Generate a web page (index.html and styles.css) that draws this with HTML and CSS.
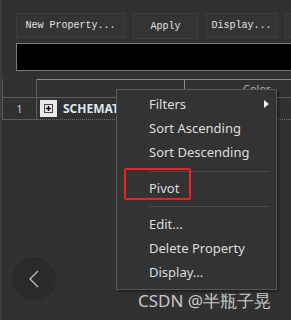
FILE: index.html
```html
<!DOCTYPE html>
<html lang="en">
<head>
    <meta charset="UTF-8">
    <title>Property Grid</title>
    <link rel="stylesheet" href="styles.css">
</head>
<body>
    <div class="panel">
        <div class="toolbar">
            <button class="btn btn-new">New Property...</button>
            <button class="btn btn-apply">Apply</button>
            <button class="btn btn-display">Display...</button>
            <button class="btn btn-more"></button>
        </div>
        <div class="filter"></div>
        <div class="grid">
            <div class="corner"></div>
            <div class="head">
                <div class="head-name"></div>
                <div class="head-color">Color</div>
            </div>
            <div class="rownum">1</div>
            <div class="cell">
                <span class="expand">
                    <svg width="9" height="9" viewBox="0 0 9 9">
                        <rect x="0.5" y="0.5" width="8" height="8" fill="none" stroke="#444"/>
                        <path d="M2 4.5 H7 M4.5 2 V7" stroke="#111" stroke-width="1.4"/>
                    </svg>
                </span>
                <span class="name">SCHEMATIC</span>
            </div>
        </div>
    </div>

    <ul class="menu">
        <li class="item sub">Filters</li>
        <li class="item">Sort Ascending</li>
        <li class="item">Sort Descending</li>
        <li class="sep"></li>
        <li class="item">Pivot</li>
        <li class="sep"></li>
        <li class="item">Edit...</li>
        <li class="item">Delete Property</li>
        <li class="item">Display...</li>
    </ul>
    <div class="mark"></div>

    <div class="back">
        <svg width="12" height="18" viewBox="0 0 12 18">
            <path d="M10 1 L2 9 L10 17" fill="none" stroke="#bdbdbd" stroke-width="1.3"/>
        </svg>
    </div>
    <div class="credit">CSDN @半瓶子晃</div>
</body>
</html>
```

FILE: styles.css
```css
*{
    box-sizing: border-box;
}

body{
    margin: 0;
    width: 291px;
    height: 320px;
    overflow: hidden;
    background: #313131;
    font-family: 'Noto Sans', sans-serif;
    position: relative;
}

.panel{
    height: 100%;
    overflow: hidden;
    border-left: 2px solid #3c3c3c;
    padding-top: 13px;
}

.toolbar{
    display: flex;
    gap: 8px;
    padding-left: 14px;
    white-space: nowrap;
}

.btn{
    flex: none;
    height: 25px;
    background: #343434;
    border: 1px solid #3e3e3e;
    color: #e2e2e2;
    font-family: 'Liberation Mono', monospace;
    font-size: 10px;
    padding: 0;
}

.btn-new{ width: 109px; }
.btn-apply{ width: 65px; height: 26px; }
.btn-display{ width: 71px; }
.btn-more{ width: 40px; }

.filter{
    margin: 4px 0 0 14px;
    height: 28px;
    background: #000;
    border: 1px solid #7c7c7c;
    border-right: none;
}

.grid{
    margin-top: 8px;
    display: grid;
    grid-template-columns: 35px 1fr;
    grid-template-rows: 19px 22px;
}

.corner{
    border-right: 1px solid #5c5c5c;
    border-bottom: 1px solid #5c5c5c;
    border-left: 1px solid #5c5c5c;
}

.head{
    display: flex;
    border-top: 1px solid #8a8a8a;
    border-bottom: 1px solid #5c5c5c;
}

.head-name{
    width: 148px;
    border-right: 1px solid #8a8a8a;
}

.head-color{
    padding-left: 58px;
    font-size: 11px;
    color: #9fb4cc;
    line-height: 18px;
}

.rownum{
    border: 1px solid #5c5c5c;
    border-top: none;
    text-align: center;
    font-size: 11px;
    color: #c9c9d9;
    line-height: 21px;
}

.cell{
    display: flex;
    align-items: center;
    gap: 6px;
    padding-left: 3px;
    border-bottom: 1px dotted #6a6a6a;
}

.expand{
    width: 17px;
    height: 17px;
    background: #e9e9e9;
    display: flex;
    align-items: center;
    justify-content: center;
}

.name{
    font-size: 12px;
    font-weight: 700;
    color: #dce6f2;
}

.menu{
    position: absolute;
    left: 116px;
    top: 89px;
    width: 161px;
    margin: 0;
    padding: 2px 0 5px;
    list-style: none;
    background: #333;
    border: 1px solid #585858;
    box-shadow: 2px 2px 2px rgba(0, 0, 0, 0.35);
}

.item{
    height: 24px;
    line-height: 24px;
    padding-left: 32px;
    font-size: 13px;
    color: #dedede;
}

.sub{
    position: relative;
}

.sub::after{
    content: "";
    position: absolute;
    right: 7px;
    top: 8px;
    border-left: 5px solid #f0f0f0;
    border-top: 4px solid transparent;
    border-bottom: 4px solid transparent;
}

.sep{
    height: 1px;
    margin: 6px 6px 5px 32px;
    background: #4a4a4a;
}

.sep:nth-child(4){
    margin-top: 7px;
    margin-bottom: 4px;
}

.mark{
    position: absolute;
    left: 124px;
    top: 168px;
    width: 67px;
    height: 32px;
    border: 2px solid #f0201c;
    border-radius: 2px;
}

.back{
    position: absolute;
    left: 12px;
    top: 257px;
    width: 44px;
    height: 44px;
    border-radius: 50%;
    background: #2a2a2a;
    display: flex;
    align-items: center;
    justify-content: center;
}

.credit{
    position: absolute;
    left: 138px;
    top: 289px;
    font-size: 17px;
    color: #c8c8c8;
}
```
